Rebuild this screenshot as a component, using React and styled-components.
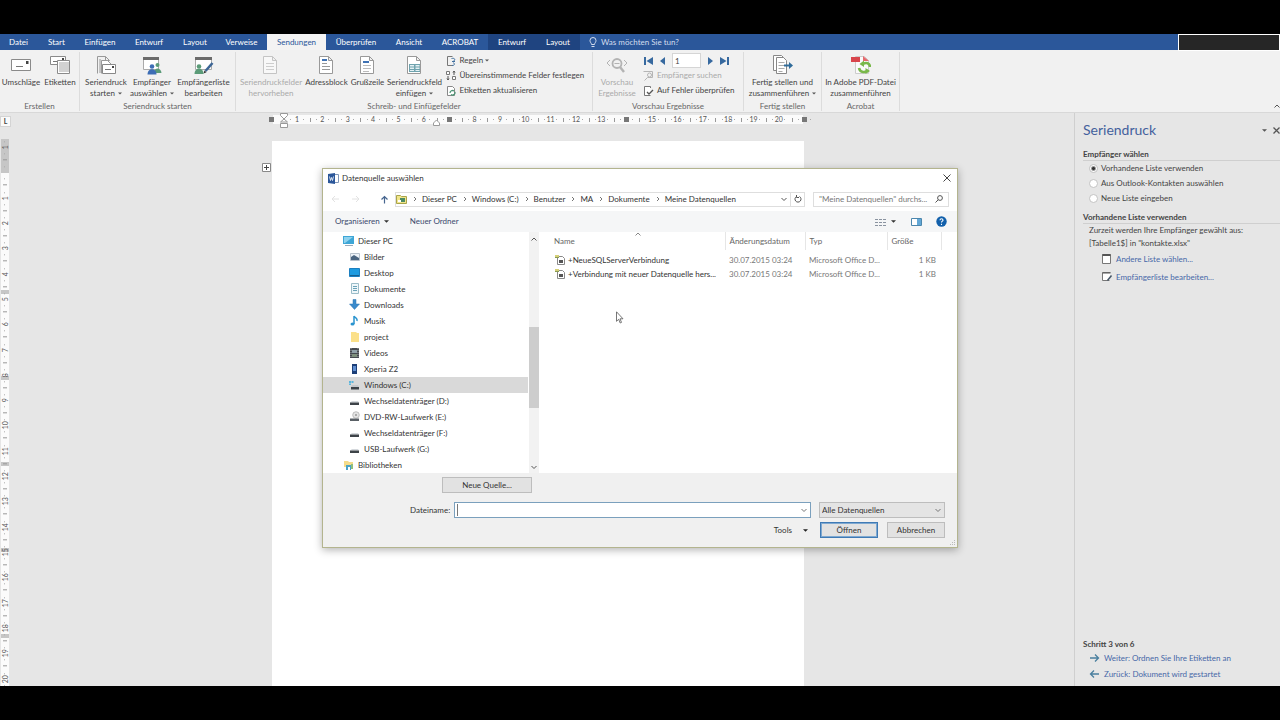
import React, { useState } from "react";
import styled, { createGlobalStyle } from "styled-components";

const GlobalStyle = createGlobalStyle`
    * {
        box-sizing: border-box;
    }

    body {
        margin: 0;
        background: #000;
        font-family: Lato, "Open Sans", sans-serif;
        font-size: 8px;
        line-height: 11px;
        color: #444;
    }

    button,
    input,
    select {
        font: inherit;
        color: inherit;
        margin: 0;
        padding: 0;
        border: 0;
        background: none;
        outline: none;
    }

    h1,
    h2,
    p {
        margin: 0;
        font-weight: normal;
    }

    svg {
        display: block;
        flex: none;
    }
`;

const Screen = styled.div`
    position: relative;
    display: flex;
    flex-direction: column;
    height: 100vh;
    padding: 34px 0;
    overflow: hidden;
`;

/* ---------- tabs ---------- */

const TabBar = styled.nav`
    display: flex;
    flex: none;
    height: 16px;
    background: #2b579a;
    color: #fff;
`;

const Tab = styled.button`
    width: ${(p) => p.$width}px;
    height: 16px;
    white-space: nowrap;
    color: ${(p) => (p.$active ? "#2b579a" : "#fff")};
    background: ${(p) => (p.$active ? "#f3f3f3" : p.$context ? "#1f4480" : "none")};
`;

const TellMe = styled.button`
    display: flex;
    align-items: center;
    gap: 4px;
    margin-left: 9px;
    color: #d3ddee;
`;

const AccountBox = styled.div`
    width: 102px;
    height: 17px;
    margin-left: auto;
    border: 1px solid #fff;
    background: #262626;
    z-index: 1;
`;

/* ---------- ribbon ---------- */

const RibbonBar = styled.div`
    display: flex;
    flex: none;
    height: 63px;
    padding-top: 2px;
    background: #f1f1f1;
    border-bottom: 1px solid #d8d8d8;
`;

const Group = styled.section`
    display: flex;
    flex-direction: column;
    width: ${(p) => p.$width}px;
    height: 59px;
    border-right: 1px solid #dcdcdc;
`;

const GroupBody = styled.div`
    display: flex;
    flex: none;
    justify-content: center;
    height: 49px;
`;

const GroupTitle = styled.div`
    text-align: center;
    color: #666;
    white-space: nowrap;
`;

const BigButton = styled.button`
    display: flex;
    flex-direction: column;
    align-items: center;
    width: ${(p) => p.$width}px;
    padding-top: 3px;
    white-space: nowrap;
    color: ${(p) => (p.$disabled ? "#aaa" : "#444")};

    svg.icon {
        margin-bottom: 2px;
    }
`;

const ButtonLine = styled.span`
    display: flex;
    align-items: center;
    gap: 3px;
    height: 11px;
`;

const SmallColumn = styled.div`
    display: flex;
    flex-direction: column;
    width: ${(p) => p.$width}px;
    padding: 1px 0 0 2px;
`;

const SmallButton = styled.button`
    display: flex;
    align-items: center;
    gap: 2px;
    height: 15px;
    white-space: nowrap;
    color: ${(p) => (p.$disabled ? "#aaa" : "#444")};
`;

const RecordNav = styled.div`
    display: flex;
    align-items: center;
    gap: 7px;
    height: 15px;
    padding-left: 1px;

    input {
        width: 29px;
        height: 15px;
        padding-left: 2px;
        border: 1px solid #d5d5d5;
        background: #fff;
    }
`;

const CollapseButton = styled.button`
    display: flex;
    align-items: flex-end;
    margin-left: auto;
    padding-bottom: 3px;
`;

/* ---------- document ---------- */

const Work = styled.div`
    display: flex;
    flex: 1;
    min-height: 0;
    background: #e6e6e6;
`;

const Canvas = styled.main`
    display: grid;
    grid-template-columns: 10px 1fr 8px;
    grid-template-rows: 26px 1fr;
    flex: 1;
    min-width: 0;
    min-height: 0;
`;

const TabStop = styled.button`
    width: 11px;
    height: 11px;
    margin-top: 3px;
    background: #fafafa;
    border: 1px solid #d4d4d4;
    font-size: 7px;
    font-weight: 700;
    line-height: 9px;
`;

const HRuler = styled.div`
    position: relative;
    display: flex;
    justify-self: center;
    width: 558px;
    height: 9px;
    margin-top: 2px;
    background: linear-gradient(to right, transparent 14px, #fbfbfb 14px, #fbfbfb 544px, transparent 544px);
`;

const HCell = styled.span`
    display: flex;
    flex: 1;
    align-items: center;
    justify-content: center;
    font-size: 7px;
    line-height: 9px;
    color: #555;
    background:
        linear-gradient(#999, #999) 0 50% / 1px 4px no-repeat,
        linear-gradient(#aaa, #aaa) 25% 50% / 1px 1px no-repeat,
        linear-gradient(#aaa, #aaa) 75% 50% / 1px 1px no-repeat;

    &:first-child {
        background: none;
    }
`;

const ColumnMark = styled.i`
    width: 5px;
    height: 5px;
    background: #777;
`;

const IndentMark = styled.svg`
    position: absolute;
    left: ${(p) => p.$left}px;
    top: ${(p) => p.$top}px;
`;

/* grey top margin, then table row bars every 86px */
const VRuler = styled.div`
    grid-column: 1;
    display: flex;
    flex-direction: column;
    min-height: 0;
    margin-left: 1px;
    margin-right: 1px;
    overflow: hidden;
    background:
        linear-gradient(#c6c6c6 34px, #fbfbfb 34px, #fbfbfb 140px, transparent 140px),
        repeating-linear-gradient(#fbfbfb 0, #fbfbfb 65px, #c6c6c6 65px, #c6c6c6 69px, #fbfbfb 69px, #fbfbfb 86px);
`;

const VCells = styled.div`
    display: flex;
    flex: 1;
    flex-direction: column;
    min-height: 0;
    margin: -4px 0 -6px;
`;

const VCell = styled.span`
    display: flex;
    flex: 1;
    align-items: center;
    justify-content: center;
    min-height: 0;
    font-size: 7px;
    line-height: 8px;
    color: #555;
    writing-mode: vertical-rl;
    transform: rotate(180deg);
    background:
        linear-gradient(#999, #999) 50% 0 / 4px 1px no-repeat,
        linear-gradient(#aaa, #aaa) 50% 25% / 1px 1px no-repeat,
        linear-gradient(#aaa, #aaa) 50% 75% / 1px 1px no-repeat;
`;

const Paper = styled.article`
    position: relative;
    justify-self: center;
    width: 532px;
    margin-top: 2px;
    background: #fff;
`;

const MoveHandle = styled.svg`
    position: absolute;
    left: -10px;
    top: 22px;
`;

/* ---------- task pane ---------- */

const Pane = styled.aside`
    display: flex;
    flex-direction: column;
    width: 206px;
    padding: 7px 0 4px 8px;
    border-left: 1px solid #cfcfcf;
`;

const PaneHeader = styled.header`
    display: flex;
    align-items: center;
    gap: 6px;
    height: 20px;

    h1 {
        flex: 1;
        font-size: 14px;
        line-height: 20px;
        color: #44619d;
    }
`;

const PaneHeading = styled.h2`
    margin-top: ${(p) => p.$gap}px;
    font-size: 8px;
    line-height: 11px;
    font-weight: 700;
    border-bottom: ${(p) => (p.$plain ? "0" : "1px solid #cfcfcf")};
`;

const Option = styled.label`
    display: flex;
    align-items: center;
    gap: 3px;
    height: 15px;
    padding-left: 6px;

    input {
        appearance: none;
        width: 9px;
        height: 9px;
        border: 1px solid #c3c3c3;
        border-radius: 50%;
        background: #fff;
    }

    input:checked {
        background: radial-gradient(#333 1px, #fff 3px);
    }
`;

const PaneText = styled.p`
    padding-left: 6px;
    line-height: 13px;
`;

const PaneLink = styled.a`
    display: flex;
    align-items: center;
    gap: 3px;
    height: ${(p) => p.$height}px;
    padding-left: ${(p) => p.$indent}px;
    color: #4668a8;
    text-decoration: none;
`;

const Spacer = styled.div`
    flex: 1;
`;

/* ---------- dialog ---------- */

const Overlay = styled.div`
    position: absolute;
    inset: 0;
    display: flex;
    align-items: flex-start;
    justify-content: center;
    padding-top: 168px;
`;

const Dialog = styled.div`
    width: 636px;
    border: 1px solid #b3b48e;
    background: #fff;
    box-shadow: 0 2px 8px rgba(0, 0, 0, 0.3);
    color: #333;
`;

const TitleBar = styled.header`
    display: flex;
    align-items: center;
    gap: 3px;
    height: 18px;
    padding: 0 6px 0 5px;

    h1 {
        flex: 1;
        font-size: 8px;
        line-height: 11px;
    }
`;

const AddressRow = styled.div`
    display: flex;
    align-items: center;
    height: 24px;
    padding: 0 8px 0 7px;
`;

const NavButtons = styled.div`
    display: flex;
    align-items: center;
    gap: 9px;
    width: 65px;

    svg:last-child {
        margin-left: 10px;
    }
`;

const AddressBox = styled.div`
    display: flex;
    flex: 1;
    align-items: center;
    height: 15px;
    border: 1px solid #dedede;
    white-space: nowrap;
`;

const Crumb = styled.span`
    display: flex;
    align-items: center;

    svg {
        margin: 0 5px 0 6px;
    }
`;

const RefreshButton = styled.button`
    display: flex;
    align-items: center;
    justify-content: center;
    width: 14px;
    height: 13px;
    margin-left: 3px;
    border-left: 1px solid #dedede;
`;

const SearchBox = styled.label`
    display: flex;
    align-items: center;
    width: 136px;
    height: 15px;
    margin-left: 8px;
    padding: 0 5px;
    border: 1px solid #dedede;

    input {
        flex: 1;
        min-width: 0;
    }

    input::placeholder {
        color: #777;
        opacity: 1;
    }
`;

const Toolbar = styled.div`
    display: flex;
    align-items: center;
    height: 21px;
    padding: 0 10px 0 12px;
    background: #f5f6f7;
    color: #3b4a6d;
`;

const ToolButton = styled.button`
    display: flex;
    align-items: center;
    gap: 4px;
    margin-right: ${(p) => p.$gap}px;
`;

const Browser = styled.div`
    display: flex;
    height: 241px;
    overflow: hidden;
`;

const Tree = styled.ul`
    width: 205px;
    margin: 0;
    padding: 1px 0 0;
    list-style: none;
`;

const TreeRow = styled.li`
    display: flex;
    align-items: center;
    gap: 3px;
    height: 16px;
    padding-left: ${(p) => (p.$root ? 20 : 26)}px;
    background: ${(p) => (p.$selected ? "#d9d9d9" : "none")};
`;

const ScrollBar = styled.div`
    display: flex;
    flex-direction: column;
    align-items: center;
    width: 10px;
    margin: 0 1px;
    padding: 4px 0 3px;
    background: #f2f2f2;
`;

const Thumb = styled.div`
    width: 10px;
    height: 81px;
    margin: 85px 0 auto;
    background: #cdcdcd;
`;

const FilePane = styled.div`
    position: relative;
    flex: 1;
`;

const SortMark = styled.svg`
    position: absolute;
    left: 95px;
    top: 0;
`;

const FileTable = styled.table`
    width: 401px;
    table-layout: fixed;
    border-collapse: collapse;
    color: #777;

    th,
    td {
        padding: 0 5px 0 4px;
        text-align: left;
        font-weight: normal;
        white-space: nowrap;
    }

    th {
        height: 18px;
        color: #666;
        border-right: 1px solid #e6e6e6;
    }

    th:first-child,
    td:first-child {
        padding-left: 14px;
        padding-right: 0;
    }

    td {
        height: 14px;
    }

    td:last-child {
        text-align: right;
    }

    tbody::before {
        content: "";
        display: block;
        height: 3px;
    }
`;

const FileName = styled.span`
    display: flex;
    align-items: center;
    gap: 2px;
    color: #333;
`;

const Footer = styled.footer`
    position: relative;
    display: flex;
    flex-direction: column;
    gap: 4px;
    height: 74px;
    padding: 4px 12px 8px 119px;
    background: #f0f0f0;
`;

const FooterRow = styled.div`
    display: flex;
    align-items: center;
    justify-content: ${(p) => (p.$end ? "flex-end" : "flex-start")};
    gap: ${(p) => (p.$end ? 9 : 8)}px;
    height: 16px;
    margin-bottom: ${(p) => (p.$space ? 5 : 0)}px;
`;

const PushButton = styled.button`
    width: ${(p) => p.$width}px;
    height: 16px;
    border: 1px solid ${(p) => (p.$primary ? "#3f7ab5" : "#bdbdbd")};
    box-shadow: ${(p) => (p.$primary ? "inset 0 0 0 1px #7fa9d1" : "none")};
    background: #e2e2e2;
`;

const NameField = styled.div`
    display: flex;
    flex: 1;
    align-items: center;
    gap: 4px;
    margin-left: -32px;

    label {
        width: 40px;
        white-space: nowrap;
    }
`;

const ComboBox = styled.div`
    display: flex;
    flex: 1;
    align-items: center;
    height: 16px;
    padding: 0 3px 0 2px;
    border: 1px solid #7ba0bd;
    background: #fff;

    input {
        flex: 1;
        height: 12px;
        border-left: 1px solid #777;
    }
`;

const SelectBox = styled.div`
    display: flex;
    align-items: center;
    width: 126px;
    height: 16px;
    padding: 0 3px 0 2px;
    border: 1px solid #bdbdbd;
    background: #e4e4e4;

    select {
        flex: 1;
        appearance: none;
    }
`;

const ToolsButton = styled.button`
    display: flex;
    align-items: center;
    gap: 11px;
    margin-right: 3px;
`;

const Grip = styled.svg`
    position: absolute;
    right: 1px;
    bottom: 1px;
`;

const Pointer = styled.svg`
    position: absolute;
    left: 76px;
    top: 79px;
`;

/* ---------- icons ---------- */

function Caret({ size = 5, color = "#555" }) {
    return (
        <svg width={size} height="3" viewBox="0 0 6 3" fill={color}>
            <path d="M0 0h6L3 3z" />
        </svg>
    );
}

function Chevron({ up, right, color = "#555" }) {
    const d = right ? "M2 1l2 2-2 2" : up ? "M0.500 4.500L3 2l2.500 2.500" : "M0.500 2L3 4.500 5.500 2";
    return (
        <svg width={right ? 4 : 6} height="6" viewBox={right ? "1 0 4 6" : "0 0 6 6"} fill="none" stroke={color}>
            <path d={d} />
        </svg>
    );
}

const SHEET = <path d="M2.500 1.500h9l4 4v13h-13z M11.500 1.500v4h4" fill="#fff" stroke="#999" />;

const BIG_ICONS = {
    envelope: (
        <>
            <path d="M0.500 4.500h19v11h-19z" fill="#fff" stroke="#8a8a8a" />
            <path d="M5 11.500h7" stroke="#777" />
            <path d="M15 6h2.500v3H15z" fill="#444" />
        </>
    ),
    labels: (
        <>
            <path d="M0.500 1.500h15v8h-15z" fill="#fff" stroke="#8a8a8a" />
            <path d="M3 6.500h4" stroke="#777" />
            <path d="M12 3h2v2h-2z" fill="#444" />
            <path d="M7.500 5.500h12v13h-12z" fill="#fff" stroke="#8a8a8a" />
            <path d="M10 7v10M12 7v10M14 7v10M16 7v10M18 7v10" stroke="#a5a5a5" />
        </>
    ),
    merge: (
        <>
            <path d="M1.500 18.500v-17h8l4 4M9.500 1.500v4h4M4 4v14" fill="none" stroke="#999" />
            <path d="M5.500 18.500V5.500h6l5 5" fill="#fff" stroke="#999" />
            <path d="M6.500 9.500h13v9h-13z" fill="#fff" stroke="#888" />
            <path d="M9 14.500h6" stroke="#777" />
            <path d="M16 11h2v2h-2z" fill="#444" />
        </>
    ),
    people: (
        <>
            <path d="M1.500 2.500h15v12h-15z" fill="#fff" stroke="#aaa" />
            <path d="M1 2h16v3H1z" fill="#6b6b6b" />
            <circle cx="15.500" cy="10" r="2" fill="#5b9b78" />
            <path d="M12 18c0-6 7-6 7.500 0z" fill="#5b9b78" />
            <circle cx="10" cy="11.500" r="2.300" fill="#3d6db5" />
            <path d="M5.500 19.500c0-7 9-7 9 0z" fill="#3d6db5" />
        </>
    ),
    editList: (
        <>
            <path d="M1.500 2.500h16v12h-16z" fill="#fff" stroke="#aaa" />
            <path d="M1 2h17v3H1z" fill="#6b6b6b" />
            <circle cx="5" cy="11.500" r="2.300" fill="#5b9b78" />
            <path d="M0.500 19c0-7 9-7 9 0z" fill="#5b9b78" />
            <path d="M18.500 8l-7 8" stroke="#3c6595" strokeWidth="2.500" />
            <path d="M9.500 18.500l1-3 2 1.800z" fill="#333" />
        </>
    ),
    fields: (
        <g opacity="0.5">
            {SHEET}
            <path d="M5 8.500h8M5 11.500h8M5 14.500h8" stroke="#aaa" />
        </g>
    ),
    address: (
        <>
            {SHEET}
            <path d="M5 4h5v2H5z" fill="#3f72b4" />
            <path d="M5 8.500h5M5 11.500h8M5 14.500h8" stroke="#999" />
        </>
    ),
    greeting: (
        <>
            {SHEET}
            <path d="M5 6h6v2H5z" fill="#3f72b4" />
            <path d="M5 10.500h8M5 13.500h8M5 16.500h6" stroke="#bbb" />
        </>
    ),
    insertField: (
        <>
            {SHEET}
            <path d="M4 9h11v8H4z" fill="#6fa3ae" />
            <path d="M5 10h4v1.500H5zM10.500 10h4v1.500h-4zM5 12.500h4V14H5zM10.500 12.500h4V14h-4zM5 15h4v1H5zM10.500 15h4v1h-4z" fill="#e5f1f4" />
        </>
    ),
    preview: (
        <g fill="none" stroke="#b3b3b3">
            <circle cx="10" cy="8.500" r="4.500" strokeWidth="1.800" />
            <path d="M13 12l4 5" strokeWidth="2.400" />
            <path d="M0 8l3-3M0 8l3 3M20 8l-3-3M20 8l-3 3M7.500 8.500h5" />
        </g>
    ),
    finish: (
        <>
            <path d="M0.500 0.500h8l3 3v12h-11z" fill="#fff" stroke="#888" />
            <path d="M3.500 2.500h7l3 3v13h-10z" fill="#fff" stroke="#888" />
            <path d="M5.500 7.500h6M5.500 10.500h6M5.500 13.500h6M5.500 16.500h4" stroke="#aaa" />
            <path d="M11 10.500h6" stroke="#2f6b9a" strokeWidth="2" />
            <path d="M16 7l4 3.500-4 3.500z" fill="#2f6b9a" />
        </>
    ),
    pdf: (
        <>
            <path d="M4.500 1.500h9l4 4v13h-13z" fill="#fafafa" stroke="#ccc" />
            <path d="M0 2h9v5H0z" fill="#d8454c" />
            <path d="M12 1l6 5h-6z" fill="#e56a6e" />
            <path d="M8 13c1 5 7 5 9 2M19 12c0-4-4-5-7-3" fill="none" stroke="#79b84a" strokeWidth="2.600" />
            <path d="M13 5.500v6.500L8.500 9zM14.500 19V13l4.500 3z" fill="#79b84a" />
        </>
    ),
};

function BigIcon({ name }) {
    return (
        <svg className="icon" width="20" height="20" viewBox="0 0 20 20">
            {BIG_ICONS[name]}
        </svg>
    );
}

const SMALL_ICONS = {
    rules: (
        <>
            <path d="M6.500 1.500h-5v9h5" fill="none" stroke="#777" />
            <path d="M5.500 3.500c4-1 4 2 1.500 3M6 10.500c3 0 3-2 1-3" fill="none" stroke="#3f6f9f" />
            <path d="M6 6.500h3" stroke="#3f6f9f" />
        </>
    ),
    match: (
        <>
            <path d="M0.500 1.500h3v3h-3zM6.500 6.500h3v3h-3z" fill="#fff" stroke="#777" />
            <path d="M2 6v4M1 8.500L2 10l1-1.500M8 5V1M7 2.500L8 1l1 1.500" fill="none" stroke="#555" />
        </>
    ),
    update: (
        <>
            <path d="M1.500 1.500h5l2 2v7h-7z" fill="#fff" stroke="#888" />
            <path d="M4 8a2.500 2.500 0 0 1 4-2M9 7a2.500 2.500 0 0 1-4 2.500" fill="none" stroke="#4b9474" strokeWidth="1.300" />
        </>
    ),
    find: (
        <>
            <path d="M0.500 1.500h9v6h-5l-3 3" fill="none" stroke="#b5b5b5" />
            <circle cx="6.500" cy="5" r="2" fill="#f1f1f1" stroke="#b5b5b5" />
        </>
    ),
    check: (
        <>
            <path d="M7.500 3v-1.500h-6v9h6" fill="#fff" stroke="#777" />
            <path d="M4 7l2 2 4-4" fill="none" stroke="#555" strokeWidth="1.300" />
        </>
    ),
    table: (
        <>
            <path d="M1.500 1.500h8v9h-8z" fill="#fff" stroke="#777" />
            <path d="M1.500 2h8" stroke="#555" strokeWidth="2" />
        </>
    ),
    tableEdit: (
        <>
            <path d="M8.500 9.500h-7v-8h8" fill="#fff" stroke="#777" />
            <path d="M1.500 2h8" stroke="#555" />
            <path d="M10.500 4.500l-4 5" stroke="#456" strokeWidth="1.500" />
        </>
    ),
    arrowRight: <path d="M1 6h8M6 2.500L9.500 6 6 9.500" fill="none" stroke="#4a7f9f" strokeWidth="1.300" />,
    arrowLeft: <path d="M2 6h8M5 2.500L1.500 6 5 9.500" fill="none" stroke="#4a7f9f" strokeWidth="1.300" />,
    pc: (
        <>
            <path d="M0 1h11v8H0z" fill="#3ea6d6" />
            <path d="M1 2h9L2 8H1z" fill="#8fd2ee" />
            <path d="M2 10.500h8" stroke="#9ab" />
        </>
    ),
    pictures: (
        <>
            <path d="M1.500 2.500h9v7h-9z" fill="#eef3f8" stroke="#b8c2cc" />
            <path d="M2 6l3-2 5 3v2H2z" fill="#4a6580" />
        </>
    ),
    desktop: (
        <>
            <path d="M0.500 1.500h10v8h-10z" fill="#1e9be0" stroke="#1c7fc0" />
            <path d="M1 8.500h9" stroke="#156090" />
        </>
    ),
    documents: (
        <>
            <path d="M2.500 0.500h7v10h-7z" fill="#eff7fa" stroke="#9bbcc8" />
            <path d="M4 3.500h4M4 5.500h4M4 7.500h4" stroke="#6aa2b8" />
        </>
    ),
    downloads: <path d="M4 0.500h3V5h3.500L5.500 10.500 0.500 5H4z" fill="#3a8acb" stroke="#2d74b0" strokeWidth="0.500" />,
    music: (
        <>
            <path d="M5 1v8M5 1c1 2 4 2 3 5" fill="none" stroke="#2a94cf" strokeWidth="1.500" />
            <ellipse cx="3.500" cy="9" rx="2" ry="1.500" fill="#2a94cf" />
        </>
    ),
    folder: <path d="M2 1h5l1 1h2v9H2z" fill="#fbe08a" />,
    videos: (
        <>
            <path d="M1 1h9v10H1z" fill="#45494f" />
            <path d="M3 3h5v3H3z" fill="#8fa0a8" />
            <path d="M3 7h5v3H3z" fill="#7d8f7c" />
            <path d="M2 1v10M9 1v10" stroke="#ddd" strokeWidth="0.600" strokeDasharray="1 1" />
        </>
    ),
    phone: (
        <>
            <path d="M3 1h5v10H3z" fill="#1d3f78" />
            <path d="M4 3h3v5H4z" fill="#5f8ed0" />
        </>
    ),
    driveC: (
        <>
            <path d="M0 2h2v2H0zM2.500 2h2v2h-2zM0 4.500h2V6H0z" fill="#5bb6dd" />
            <path d="M3 6h6l1 2H2z" fill="#c4c8cc" />
            <path d="M2 8h8v2.500H2z" fill="#3d4348" />
        </>
    ),
    drive: (
        <>
            <path d="M3 6h6l1 1.500H1z" fill="#d4d8dc" />
            <path d="M1 7.500h9V10H1z" fill="#3d4348" />
        </>
    ),
    dvd: (
        <>
            <circle cx="7" cy="4" r="3.300" fill="#e4e4e4" stroke="#aaa" strokeWidth="0.700" />
            <circle cx="7" cy="4" r="1" fill="#999" />
            <path d="M1 7.500h9V10H1z" fill="#5a6066" />
        </>
    ),
    libraries: (
        <>
            <path d="M1 2h4l1 1h4v5H1z" fill="#f4dc8c" />
            <path d="M3 11V6h5v5H7V8H5v3z" fill="#4aa3c9" />
            <path d="M8 5h2v5H8z" fill="#8fbf7c" />
        </>
    ),
    source: (
        <>
            <path d="M3.500 2.500h5l2 2v6h-7z" fill="#fff" stroke="#888" />
            <path d="M5 6h4v3H5z" fill="#555" />
            <path d="M1 1h4v3H1z" fill="#d5d077" />
            <path d="M1 3.500h4" stroke="#8a9a55" />
        </>
    ),
};

function SmallIcon({ name }) {
    return (
        <svg width="12" height="12" viewBox="0 0 12 12">
            {SMALL_ICONS[name]}
        </svg>
    );
}

/* ---------- content ---------- */

const tabs = [
    { label: "Datei", width: 37 },
    { label: "Start", width: 39 },
    { label: "Einfügen", width: 48 },
    { label: "Entwurf", width: 50 },
    { label: "Layout", width: 42 },
    { label: "Verweise", width: 51 },
    { label: "Sendungen", width: 59, active: true },
    { label: "Überprüfen", width: 60 },
    { label: "Ansicht", width: 46 },
    { label: "ACROBAT", width: 56 },
    { label: "Entwurf", width: 48, context: true },
    { label: "Layout", width: 44, context: true },
];

const treeItems = [
    { icon: "pc", label: "Dieser PC", root: true },
    { icon: "pictures", label: "Bilder" },
    { icon: "desktop", label: "Desktop" },
    { icon: "documents", label: "Dokumente" },
    { icon: "downloads", label: "Downloads" },
    { icon: "music", label: "Musik" },
    { icon: "folder", label: "project" },
    { icon: "videos", label: "Videos" },
    { icon: "phone", label: "Xperia Z2" },
    { icon: "driveC", label: "Windows (C:)", selected: true },
    { icon: "drive", label: "Wechseldatenträger (D:)" },
    { icon: "dvd", label: "DVD-RW-Laufwerk (E:)" },
    { icon: "drive", label: "Wechseldatenträger (F:)" },
    { icon: "drive", label: "USB-Laufwerk (G:)" },
    { icon: "libraries", label: "Bibliotheken", root: true },
];

const files = [
    { name: "+NeueSQLServerVerbindung", date: "30.07.2015 03:24", type: "Microsoft Office D...", size: "1 KB" },
    { name: "+Verbindung mit neuer Datenquelle hers...", date: "30.07.2015 03:24", type: "Microsoft Office D...", size: "1 KB" },
];

const crumbs = ["Dieser PC", "Windows (C:)", "Benutzer", "MA", "Dokumente", "Meine Datenquellen"];

const hCells = Array.from({ length: 22 }, (_, i) => i);
const vCells = Array.from({ length: 22 }, (_, i) => i - 1);

function RibbonButton({ icon, lines, width, menu, disabled }) {
    return (
        <BigButton $width={width} $disabled={disabled} disabled={disabled}>
            <BigIcon name={icon} />
            {lines.map((line, i) => (
                <ButtonLine key={line}>
                    {line}
                    {menu && i === lines.length - 1 && <Caret size={4} />}
                </ButtonLine>
            ))}
        </BigButton>
    );
}

function Tabs() {
    return (
        <TabBar>
            {tabs.map((t, i) => (
                <Tab key={i} $width={t.width} $active={t.active} $context={t.context}>
                    {t.label}
                </Tab>
            ))}
            <TellMe>
                <svg width="8" height="11" viewBox="0 0 8 11" fill="none" stroke="#d3ddee">
                    <path d="M2.500 7.500C2.500 6 1 5.500 1 3.500a3 3 0 0 1 6 0c0 2-1.500 2.500-1.500 4zM2.500 9.500h3" />
                </svg>
                Was möchten Sie tun?
            </TellMe>
            <AccountBox />
        </TabBar>
    );
}

function Ribbon() {
    const [record, setRecord] = useState("1");

    return (
        <RibbonBar>
            <Group $width={80}>
                <GroupBody>
                    <RibbonButton icon="envelope" lines={["Umschläge"]} width={41} />
                    <RibbonButton icon="labels" lines={["Etiketten"]} width={37} />
                </GroupBody>
                <GroupTitle>Erstellen</GroupTitle>
            </Group>
            <Group $width={156}>
                <GroupBody>
                    <RibbonButton icon="merge" lines={["Seriendruck", "starten"]} width={46} menu />
                    <RibbonButton icon="people" lines={["Empfänger", "auswählen"]} width={46} menu />
                    <RibbonButton icon="editList" lines={["Empfängerliste", "bearbeiten"]} width={57} />
                </GroupBody>
                <GroupTitle>Seriendruck starten</GroupTitle>
            </Group>
            <Group $width={357}>
                <GroupBody>
                    <RibbonButton icon="fields" lines={["Seriendruckfelder", "hervorheben"]} width={65} disabled />
                    <RibbonButton icon="address" lines={["Adressblock"]} width={46} />
                    <RibbonButton icon="greeting" lines={["Grußzeile"]} width={36} />
                    <RibbonButton icon="insertField" lines={["Seriendruckfeld", "einfügen"]} width={58} menu />
                    <SmallColumn $width={146}>
                        <SmallButton>
                            <SmallIcon name="rules" />
                            Regeln
                            <Caret size={4} />
                        </SmallButton>
                        <SmallButton>
                            <SmallIcon name="match" />
                            Übereinstimmende Felder festlegen
                        </SmallButton>
                        <SmallButton>
                            <SmallIcon name="update" />
                            Etiketten aktualisieren
                        </SmallButton>
                    </SmallColumn>
                </GroupBody>
                <GroupTitle>Schreib- und Einfügefelder</GroupTitle>
            </Group>
            <Group $width={151}>
                <GroupBody>
                    <RibbonButton icon="preview" lines={["Vorschau", "Ergebnisse"]} width={48} disabled />
                    <SmallColumn $width={102}>
                        <RecordNav>
                            <svg width="9" height="8" viewBox="0 0 9 8" fill="#37699f">
                                <path d="M0 0h2v8H0zM9 0v8L2.500 4z" />
                            </svg>
                            <svg width="5" height="8" viewBox="0 0 5 8" fill="#37699f">
                                <path d="M5 0v8L0 4z" />
                            </svg>
                            <input aria-label="Datensatz" value={record} onChange={(e) => setRecord(e.target.value)} />
                            <svg width="5" height="8" viewBox="0 0 5 8" fill="#37699f">
                                <path d="M0 0v8l5-4z" />
                            </svg>
                            <svg width="9" height="8" viewBox="0 0 9 8" fill="#37699f">
                                <path d="M7 0h2v8H7zM0 0v8l6.500-4z" />
                            </svg>
                        </RecordNav>
                        <SmallButton $disabled disabled>
                            <SmallIcon name="find" />
                            Empfänger suchen
                        </SmallButton>
                        <SmallButton>
                            <SmallIcon name="check" />
                            Auf Fehler überprüfen
                        </SmallButton>
                    </SmallColumn>
                </GroupBody>
                <GroupTitle>Vorschau Ergebnisse</GroupTitle>
            </Group>
            <Group $width={78}>
                <GroupBody>
                    <RibbonButton icon="finish" lines={["Fertig stellen und", "zusammenführen"]} width={76} menu />
                </GroupBody>
                <GroupTitle>Fertig stellen</GroupTitle>
            </Group>
            <Group $width={78}>
                <GroupBody>
                    <RibbonButton icon="pdf" lines={["In Adobe PDF-Datei", "zusammenführen"]} width={76} />
                </GroupBody>
                <GroupTitle>Acrobat</GroupTitle>
            </Group>
            <CollapseButton aria-label="Menüband reduzieren">
                <Chevron up />
            </CollapseButton>
        </RibbonBar>
    );
}

function DocumentArea() {
    return (
        <Canvas>
            <TabStop>L</TabStop>
            <HRuler>
                {hCells.map((n) => (
                    <HCell key={n}>{n % 7 === 0 ? <ColumnMark /> : n}</HCell>
                ))}
                <IndentMark $left={21} $top={-2} width="8" height="15" viewBox="0 0 8 15" fill="#fff" stroke="#999">
                    <path d="M0.500 0.500h7v2L4 6 0.500 2.500zM4 6l3.500 3h-7zM0.500 10.500h7v4h-7z" />
                </IndentMark>
                <IndentMark $left={174} $top={4} width="7" height="7" viewBox="0 0 7 7" fill="#fff" stroke="#999">
                    <path d="M3.500 1l3 3v2.500h-6V4z" />
                </IndentMark>
            </HRuler>
            <VRuler>
                <VCells>
                    {vCells.map((n) => (
                        <VCell key={n}>{n === 0 ? "" : Math.abs(n)}</VCell>
                    ))}
                </VCells>
            </VRuler>
            <Paper>
                <MoveHandle width="9" height="9" viewBox="0 0 9 9" fill="#fff" stroke="#888">
                    <path d="M0.500 0.500h8v8h-8z" />
                    <path d="M4.500 2v5M2 4.500h5" stroke="#444" />
                </MoveHandle>
            </Paper>
        </Canvas>
    );
}

function TaskPane() {
    const [source, setSource] = useState(0);
    const options = ["Vorhandene Liste verwenden", "Aus Outlook-Kontakten auswählen", "Neue Liste eingeben"];

    return (
        <Pane>
            <PaneHeader>
                <h1>Seriendruck</h1>
                <Caret />
                <svg width="7" height="7" viewBox="0 0 7 7" stroke="#555" strokeWidth="1.300">
                    <path d="M0.500 0.500l6 6M6.500 0.500l-6 6" />
                </svg>
            </PaneHeader>
            <PaneHeading $gap={9}>Empfänger wählen</PaneHeading>
            {options.map((label, i) => (
                <Option key={label}>
                    <input type="radio" name="source" checked={source === i} onChange={() => setSource(i)} />
                    {label}
                </Option>
            ))}
            <PaneHeading $gap={6}>Vorhandene Liste verwenden</PaneHeading>
            <PaneText>Zurzeit werden Ihre Empfänger gewählt aus:</PaneText>
            <PaneText>[Tabelle1$] in "kontakte.xlsx"</PaneText>
            <PaneLink href="#" $indent={18} $height={18}>
                <SmallIcon name="table" />
                Andere Liste wählen...
            </PaneLink>
            <PaneLink href="#" $indent={18} $height={18}>
                <SmallIcon name="tableEdit" />
                Empfängerliste bearbeiten...
            </PaneLink>
            <Spacer />
            <PaneHeading $gap={0} $plain>
                Schritt 3 von 6
            </PaneHeading>
            <PaneLink href="#" $indent={6} $height={16}>
                <SmallIcon name="arrowRight" />
                Weiter: Ordnen Sie Ihre Etiketten an
            </PaneLink>
            <PaneLink href="#" $indent={6} $height={16}>
                <SmallIcon name="arrowLeft" />
                Zurück: Dokument wird gestartet
            </PaneLink>
        </Pane>
    );
}

function SourceDialog() {
    const [fileName, setFileName] = useState("");

    return (
        <Dialog role="dialog" aria-label="Datenquelle auswählen">
            <TitleBar>
                <svg width="11" height="11" viewBox="0 0 11 11">
                    <path d="M5.500 1.500h5v8h-5z" fill="#fff" stroke="#8096b8" />
                    <path d="M0 1l7-1v11l-7-1z" fill="#2b579a" />
                    <path d="M1.500 3.500l1 4 1-3 1 3 1-4" fill="none" stroke="#fff" strokeWidth="0.800" />
                </svg>
                <h1>Datenquelle auswählen</h1>
                <svg width="8" height="8" viewBox="0 0 8 8" stroke="#444">
                    <path d="M0.500 0.500l7 7M7.500 0.500l-7 7" />
                </svg>
            </TitleBar>
            <AddressRow>
                <NavButtons>
                    <svg width="11" height="8" viewBox="0 0 11 8" fill="none" stroke="#e2e2e2">
                        <path d="M2 4h7M5 1L2 4l3 3" />
                    </svg>
                    <svg width="11" height="8" viewBox="0 0 11 8" fill="none" stroke="#e2e2e2">
                        <path d="M2 4h7M6 1l3 3-3 3" />
                    </svg>
                    <svg width="9" height="9" viewBox="0 0 9 9" fill="none" stroke="#46658f" strokeWidth="1.200">
                        <path d="M4.500 8.500v-7M1.500 4.500l3-3 3 3" />
                    </svg>
                </NavButtons>
                <AddressBox>
                    <svg width="11" height="10" viewBox="0 0 11 10">
                        <path d="M0.500 1.500h4l1 1h5v7h-10z" fill="#f1e58a" stroke="#a9a44b" />
                        <path d="M4 4h5v4H4z" fill="#4b8a63" />
                        <path d="M2 6h3v2H2z" fill="#fff" />
                    </svg>
                    {crumbs.map((c) => (
                        <Crumb key={c}>
                            <Chevron right color="#777" />
                            {c}
                        </Crumb>
                    ))}
                    <Spacer />
                    <Chevron />
                    <RefreshButton aria-label="Aktualisieren">
                        <svg width="8" height="8" viewBox="0 0 8 8" fill="none" stroke="#555">
                            <path d="M2.500 1.500a3 3 0 1 0 3 0M2.500 0v2.500H5" />
                        </svg>
                    </RefreshButton>
                </AddressBox>
                <SearchBox>
                    <input aria-label="Durchsuchen" placeholder={'"Meine Datenquellen" durchs...'} />
                    <svg width="8" height="8" viewBox="0 0 8 8" fill="none" stroke="#555">
                        <circle cx="5" cy="3" r="2.400" />
                        <path d="M3.300 4.700L0.500 7.500" />
                    </svg>
                </SearchBox>
            </AddressRow>
            <Toolbar>
                <ToolButton $gap={21}>
                    Organisieren
                    <Caret color="#333" />
                </ToolButton>
                <ToolButton $gap={0}>Neuer Ordner</ToolButton>
                <Spacer />
                <ToolButton $gap={15} aria-label="Ansicht">
                    <svg width="12" height="8" viewBox="0 0 12 8" stroke="#8a93a0" strokeDasharray="3 1">
                        <path d="M0 1.500h12M0 4.500h12M0 7.500h12" />
                    </svg>
                    <Caret color="#333" />
                </ToolButton>
                <ToolButton $gap={14} aria-label="Vorschaufenster">
                    <svg width="11" height="8" viewBox="0 0 11 8">
                        <path d="M0.500 0.500h10v7h-10z" fill="#fff" stroke="#4b86ad" />
                        <path d="M6 1h4v6H6z" fill="#62a7d6" />
                    </svg>
                </ToolButton>
                <ToolButton $gap={0} aria-label="Hilfe">
                    <svg width="11" height="11" viewBox="0 0 11 11">
                        <circle cx="5.500" cy="5.500" r="5.200" fill="#1260ab" />
                        <path d="M4 4.200c0-2 3-2 3 0 0 1-1.500 1-1.500 2.300M5.500 7.700v1.200" fill="none" stroke="#fff" strokeWidth="1.100" />
                    </svg>
                </ToolButton>
            </Toolbar>
            <Browser>
                <Tree>
                    {treeItems.map((item) => (
                        <TreeRow key={item.label} $root={item.root} $selected={item.selected}>
                            <SmallIcon name={item.icon} />
                            {item.label}
                        </TreeRow>
                    ))}
                </Tree>
                <ScrollBar>
                    <Chevron up />
                    <Thumb />
                    <Chevron />
                </ScrollBar>
                <FilePane>
                    <SortMark width="6" height="4" viewBox="0 0 6 4" fill="none" stroke="#888">
                        <path d="M0.500 3.500L3 1l2.500 2.500" />
                    </SortMark>
                    <FileTable>
                        <colgroup>
                            <col width="185" />
                            <col width="80" />
                            <col width="82" />
                            <col width="54" />
                        </colgroup>
                        <thead>
                            <tr>
                                <th>Name</th>
                                <th>Änderungsdatum</th>
                                <th>Typ</th>
                                <th>Größe</th>
                            </tr>
                        </thead>
                        <tbody>
                            {files.map((f) => (
                                <tr key={f.name}>
                                    <td>
                                        <FileName>
                                            <SmallIcon name="source" />
                                            {f.name}
                                        </FileName>
                                    </td>
                                    <td>{f.date}</td>
                                    <td>{f.type}</td>
                                    <td>{f.size}</td>
                                </tr>
                            ))}
                        </tbody>
                    </FileTable>
                    <Pointer width="8" height="13" viewBox="0 0 8 13" fill="#fff" stroke="#555" strokeWidth="0.800">
                        <path d="M0.500 0.800v9.500l2.200-2 1.500 3.700 1.300-0.600L4 7.800h3z" />
                    </Pointer>
                </FilePane>
            </Browser>
            <Footer>
                <FooterRow $space>
                    <PushButton $width={90}>Neue Quelle...</PushButton>
                </FooterRow>
                <FooterRow>
                    <NameField>
                        <label htmlFor="filename">Dateiname:</label>
                        <ComboBox>
                            <input id="filename" value={fileName} onChange={(e) => setFileName(e.target.value)} />
                            <Chevron color="#777" />
                        </ComboBox>
                    </NameField>
                    <SelectBox>
                        <select aria-label="Dateityp">
                            <option>Alle Datenquellen</option>
                        </select>
                        <Chevron color="#777" />
                    </SelectBox>
                </FooterRow>
                <FooterRow $end>
                    <ToolsButton>
                        Tools
                        <Caret color="#222" />
                    </ToolsButton>
                    <PushButton $width={58} $primary>
                        Öffnen
                    </PushButton>
                    <PushButton $width={58}>Abbrechen</PushButton>
                </FooterRow>
                <Grip width="6" height="6" viewBox="0 0 6 6" fill="#bbb">
                    <path d="M4 0h1v1H4zM4 2h1v1H4zM2 2h1v1H2zM4 4h1v1H4zM2 4h1v1H2zM0 4h1v1H0z" />
                </Grip>
            </Footer>
        </Dialog>
    );
}

export default function App() {
    return (
        <>
            <GlobalStyle />
            <Screen>
                <Tabs />
                <Ribbon />
                <Work>
                    <DocumentArea />
                    <TaskPane />
                </Work>
                <Overlay>
                    <SourceDialog />
                </Overlay>
            </Screen>
        </>
    );
}
